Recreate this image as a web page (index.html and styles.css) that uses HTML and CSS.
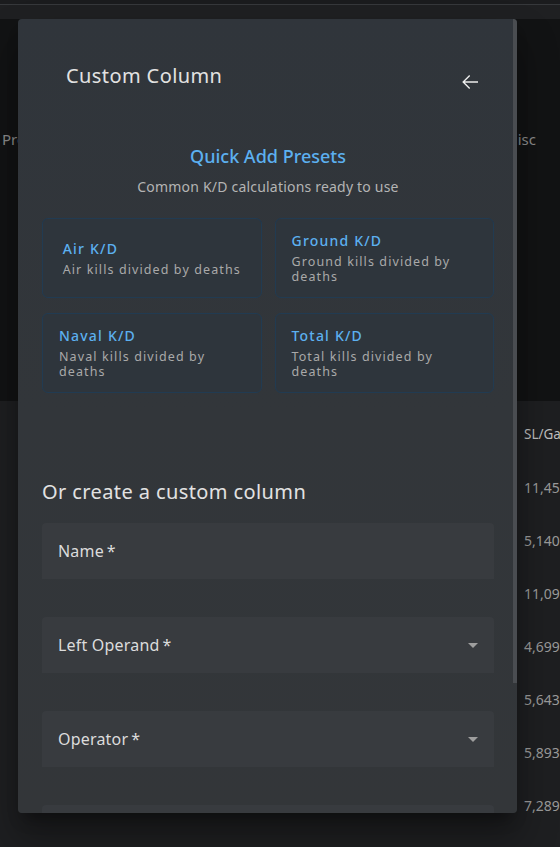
FILE: index.html
```html
<!DOCTYPE html>
<html>
<head>
<meta charset="utf-8">
<link rel="stylesheet" href="styles.css">
</head>
<body>
<div class="page">
  <div class="topbar"></div>
  <div class="hero">
    <span class="hero-left">Profile</span>
    <span class="hero-right">Misc</span>
  </div>
  <div class="table">
    <div class="col-spacer"></div>
    <div class="col">
      <div class="th">SL/Game</div>
      <div class="td">11,452</div>
      <div class="td">5,140</div>
      <div class="td">11,093</div>
      <div class="td">4,699</div>
      <div class="td">5,643</div>
      <div class="td">5,893</div>
      <div class="td">7,289</div>
    </div>
  </div>
</div>

<div class="dialog">
  <div class="header">
    <h2 class="title">Custom Column</h2>
    <button class="back" aria-label="Back">
      <svg viewBox="0 0 24 24" width="24" height="24"><path d="M20 11.25H6.9l5.3-5.3L11.2 5 4.2 12l7 7 1-1-5.3-5.25H20z" fill="currentColor"/></svg>
    </button>
  </div>

  <div class="presets">
    <h3 class="presets-title">Quick Add Presets</h3>
    <p class="presets-sub">Common K/D calculations ready to use</p>
    <div class="cards">
      <div class="card"><div class="card-body"><div class="card-title">Air K/D</div><div class="card-desc">Air kills divided by deaths</div></div></div>
      <div class="card"><div class="card-body"><div class="card-title">Ground K/D</div><div class="card-desc">Ground kills divided by deaths</div></div></div>
      <div class="card"><div class="card-body"><div class="card-title">Naval K/D</div><div class="card-desc">Naval kills divided by deaths</div></div></div>
      <div class="card"><div class="card-body"><div class="card-title">Total K/D</div><div class="card-desc">Total kills divided by deaths</div></div></div>
    </div>
  </div>

  <div class="form">
    <h3 class="form-title">Or create a custom column</h3>
    <div class="field"><span class="label">Name&thinsp;*</span></div>
    <div class="field"><span class="label">Left Operand&thinsp;*</span>
      <svg class="caret" viewBox="0 0 24 24" width="24" height="24"><path d="M7 10l5 5 5-5z" fill="currentColor"/></svg></div>
    <div class="field"><span class="label">Operator&thinsp;*</span>
      <svg class="caret" viewBox="0 0 24 24" width="24" height="24"><path d="M7 10l5 5 5-5z" fill="currentColor"/></svg></div>
    <div class="field"><span class="label">Right Operand&thinsp;*</span></div>
  </div>

  <div class="scroll-thumb"></div>
</div>
</body>
</html>
```

FILE: styles.css
```css
html, body {
  margin: 0;
  padding: 0;
}
body {
  width: 560px;
  height: 847px;
  overflow: hidden;
  background: #1e1f21;
  font-family: "Noto Sans", "Open Sans", sans-serif;
  position: relative;
}
.page {
  display: flex;
  flex-direction: column;
}
.topbar {
  height: 19px;
  box-sizing: border-box;
  border-top: 4px solid #1b1c1e;
  box-shadow: inset 0 1px 0 #36383b;
  background: #1f2022;
}
.hero {
  height: 382px;
  background: #121314;
  display: flex;
  justify-content: space-between;
  align-items: flex-start;
  padding: 110px 24px 0 2px;
  box-sizing: border-box;
  color: #8c8c8c;
  font-size: 15px;
  line-height: 20px;
}
.table {
  display: grid;
  grid-template-columns: 524px 100px;
}
.col {
  display: flex;
  flex-direction: column;
  padding-top: 24px;
  white-space: nowrap;
}
.th {
  color: #bdbdbd;
  font-size: 13.5px;
  line-height: 18px;
  height: 54px;
}
.td {
  color: #9a9a9a;
  font-size: 14px;
  line-height: 18px;
  height: 53px;
}

.dialog {
  position: absolute;
  left: 18px;
  top: 19px;
  width: 499px;
  height: 794px;
  overflow: hidden;
  border-radius: 4px;
  background: linear-gradient(180deg, #30353b 0%, #32363a 50%, #333639 100%);
  box-shadow: 0 11px 15px -7px rgba(0,0,0,0.4), 0 24px 38px 3px rgba(0,0,0,0.3);
}
.header {
  display: flex;
  justify-content: space-between;
  align-items: flex-start;
  padding: 0 35px 0 48px;
}
.title {
  margin: 45px 0 0;
  font-size: 20px;
  font-weight: 400;
  line-height: 24px;
  color: #e2e2e2;
  letter-spacing: 0.4px;
}
.back {
  margin-top: 51px;
  width: 24px;
  height: 24px;
  padding: 0;
  border: 0;
  background: none;
  color: #ececec;
  display: flex;
}
.presets {
  display: flex;
  flex-direction: column;
  align-items: center;
  padding: 0 23px 0 24px;
}
.presets-title {
  margin: 50px 0 0;
  font-size: 18px;
  font-weight: 500;
  line-height: 24px;
  color: #5cb0f0;
}
.presets-sub {
  margin: 10px 0 0;
  font-size: 14px;
  line-height: 18px;
  color: #b4b4b4;
  letter-spacing: 0.2px;
}
.cards {
  margin-top: 22px;
  align-self: stretch;
  display: grid;
  grid-template-columns: 1fr 1fr;
  column-gap: 13px;
  row-gap: 15px;
}
.card {
  height: 80px;
  box-sizing: border-box;
  border: 1px solid #213b52;
  border-radius: 6px;
  background: #2e353c;
  padding: 0 16px;
  display: flex;
  align-items: center;
  justify-content: center;
}
.card-body {
  display: flex;
  flex-direction: column;
  gap: 4px;
}
.card-title {
  font-size: 14px;
  line-height: 18px;
  font-weight: 500;
  color: #5cb0f0;
  letter-spacing: 1.2px;
}
.card-desc {
  font-size: 12.5px;
  line-height: 15px;
  color: #a9a9a9;
  letter-spacing: 1.1px;
}
.form {
  padding: 0 23px 0 24px;
  display: flex;
  flex-direction: column;
}
.form-title {
  margin: 87px 0 19px;
  font-size: 20px;
  font-weight: 400;
  line-height: 24px;
  color: #e2e2e2;
  letter-spacing: 0.4px;
}
.field {
  height: 56px;
  margin-bottom: 38px;
  border-radius: 4px 4px 0 0;
  background: #383b3f;
  display: flex;
  align-items: center;
  justify-content: space-between;
  padding: 0 9px 0 16px;
  flex-shrink: 0;
}
.label {
  font-size: 16px;
  color: #dcdcdc;
  letter-spacing: 0.2px;
}
.caret {
  color: #9e9e9e;
}
.scroll-thumb {
  position: absolute;
  right: 0;
  top: 0;
  width: 4px;
  height: 664px;
  background: #4a4d51;
}
```
